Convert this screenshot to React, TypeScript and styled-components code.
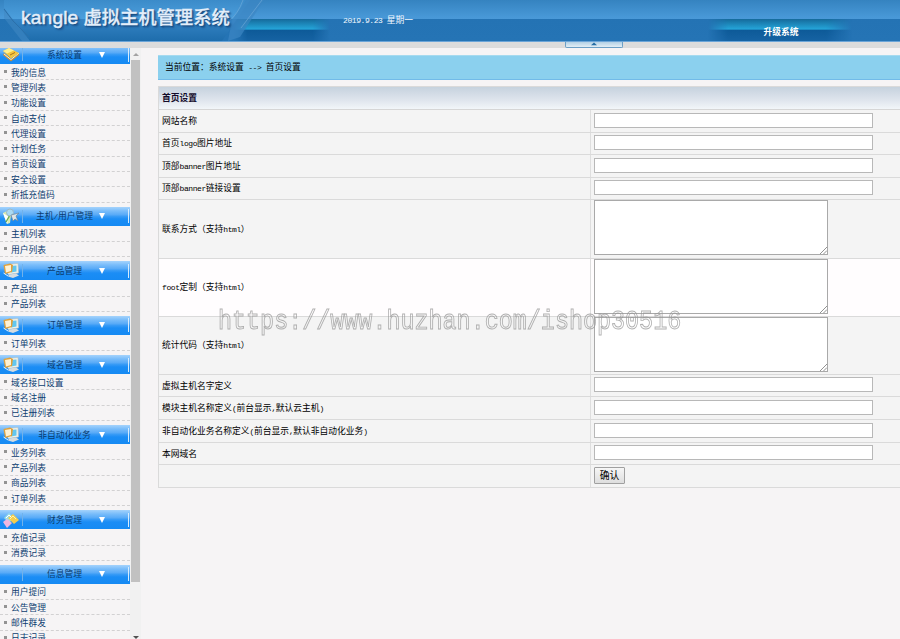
import React from "react";
import styled, { createGlobalStyle } from "styled-components";

const Global = createGlobalStyle`
  * { box-sizing: border-box; }
  body {
    margin: 0;
    background: #f6f4f5;
    font: 8.75px/12px "Noto Sans CJK SC", sans-serif;
    color: #000;
    overflow: hidden;
  }
`;

const Page = styled.div`
  width: 100%;
  height: 639px;
  display: flex;
  flex-direction: column;
  position: relative;
  overflow: hidden;
`;

const Header = styled.header`
  position: relative;
  flex: none;
  height: 42px;
  border-bottom: 1px solid #6ba5d8;
  background: linear-gradient(#3583c0 0, #4898d7 17px, #4a99d8 19px, #2473b4 19px, #2574b5 100%);
`;

const HeaderArt = styled.svg`
  display: block;
  width: 900px;
  height: 41px;
`;

const Logo = styled.h1`
  position: absolute;
  left: 21px;
  top: 6px;
  margin: 0;
  display: flex;
  align-items: baseline;
  gap: 5px;
  font: 500 18.3px/21px "Noto Sans CJK SC", sans-serif;
  color: #e3eefa;
  -webkit-text-stroke: 0.3px #e3eefa;
  text-shadow: 1px 1px 1px #164a80, 2px 2px 2px #1c528b;
  white-space: nowrap;
`;

const LogoLatin = styled.span`
  font: 400 19.2px/21px "Liberation Sans", sans-serif;
  letter-spacing: 0.15px;
  -webkit-text-stroke: 0.5px #e3eefa;
`;

const DateText = styled.div`
  position: absolute;
  left: 343px;
  top: 14px;
  color: #f2f8ff;
  white-space: pre;
`;

const Upgrade = styled.a`
  position: absolute;
  left: 711px;
  top: 26px;
  width: 140px;
  text-align: center;
  color: #fff;
  font-weight: 700;
`;

const Strip = styled.div`
  flex: none;
  height: 6px;
  background: #dcdcdc;
  padding-left: 565px;
`;

const Toggle = styled.div`
  width: 58px;
  height: 6px;
  display: flex;
  justify-content: center;
  border: 1px solid #6b9fc6;
  border-top: 0;
  border-radius: 0 0 2px 2px;
  background: linear-gradient(#b2d0e5, #e2eef5);
`;

const Body = styled.div`
  flex: 1;
  min-height: 0;
  display: flex;
`;

const Sidebar = styled.nav`
  width: 130px;
  flex: none;
  overflow: hidden;
`;

const Menu = styled.div`
  margin-top: -3px;
`;

const Group = styled.section`
  padding-bottom: 4px;
`;

const GroupHead = styled.div`
  height: 19px;
  margin-bottom: 1px;
  display: grid;
  grid-template-columns: 22px 1px 83px 1fr 1px 1px;
  align-items: center;
  background: linear-gradient(#a5d3fc 0, #78bcfa 4px, #56a9f7 8px, #3c9df6 9px, #1b8df5 12px, #168af3 100%);
  color: #0a3c70;
`;

const HeadIcon = styled.svg`
  width: 18px;
  height: 17px;
  margin-left: 2px;
`;

const HeadRule = styled.i`
  height: 13px;
  background: #71b2ea;
`;

const HeadEdge = styled.i`
  height: 14px;
  background: #d5ecff;
`;

const HeadTitle = styled.span`
  text-align: center;
  white-space: nowrap;
`;

const Arrow = styled.svg`
  width: 6px;
  height: 6px;
  margin-left: -7px;
`;

const Item = styled.a`
  height: 15.3px;
  display: flex;
  align-items: center;
  border-bottom: 1px dashed #d2d1d2;
  color: #0c3d70;
  padding: 1px 0 0 4px;
  white-space: nowrap;
  &::before {
    content: "";
    width: 3px;
    height: 3px;
    margin: -2px 4px 0 0;
    background: #939393;
  }
`;

const Scrollbar = styled.div`
  width: 11px;
  flex: none;
  display: flex;
  flex-direction: column;
  background: #f1f1f1;
  padding-left: 1px;
`;

const ScrollArrow = styled.svg`
  display: block;
  width: 10px;
  height: 12px;
`;

const Thumb = styled.div`
  height: 522px;
  margin-bottom: auto;
  background: #c1c1c1;
  width: 9px;
`;

const Main = styled.main`
  flex: 1;
  min-width: 0;
  padding: 7px 0 0 17px;
`;

const Crumb = styled.div`
  height: 25px;
  display: flex;
  align-items: center;
  padding-left: 7px;
  background: #8bd0ee;
  border-top: 1px solid #a6daef;
  border-bottom: 1px solid #72bbe9;
  white-space: pre;
`;

const Table = styled.div`
  margin-top: 6px;
  border: 1px solid #dadada;
  border-right: 0;
  border-bottom: 0;
`;

const TableHead = styled.div`
  height: 23px;
  padding-left: 3px;
  display: flex;
  align-items: center;
  font-weight: 700;
  color: #130b2a;
  background: linear-gradient(#c6d2de, #dfe5ed 60%, #f2f6f9);
  border-bottom: 1px solid #d6d6d6;
`;

const Row = styled.div<{ $h: number; $light?: boolean }>`
  height: ${(p) => p.$h}px;
  display: grid;
  grid-template-columns: 432px 1fr;
  background: ${(p) => (p.$light ? "#fffdfe" : "#f4f4f4")};
  border-bottom: 1px solid #dadada;
`;

const Label = styled.label`
  display: flex;
  align-items: center;
  padding-left: 3px;
  border-right: 1px solid #dedede;
  white-space: pre;
`;

const Cell = styled.div`
  display: flex;
  align-items: center;
  padding: 0 0 2px 3px;
`;

const TextInput = styled.input`
  width: 279px;
  height: 15px;
  padding: 0 2px;
  border: 1px solid #b8b8b8;
  background: #fff;
  border-radius: 0;
`;

const TextBox = styled.div`
  width: 234px;
  height: 55px;
  margin-top: -1px;
  display: flex;
  justify-content: flex-end;
  align-items: flex-end;
  border: 1px solid #a9a9a9;
  background: #fff;
`;

const Confirm = styled.button`
  width: 31px;
  height: 17px;
  padding: 0;
  border: 1px solid #a0a0a0;
  border-radius: 1px;
  background: linear-gradient(#f6f6f6, #dedede);
  font: 9.8px/14px "Noto Sans CJK SC", sans-serif;
`;

const Mono = styled.span`
  font-family: "Liberation Mono", monospace;
  font-size: 8px;
  letter-spacing: -0.42px;
`;

const Watermark = styled.div`
  position: absolute;
  left: 218px;
  top: 308px;
  font: 23.4px/28px "Liberation Mono", monospace;
  color: transparent;
  -webkit-text-stroke: 0.8px rgba(150, 150, 150, 0.75);
  transform: scaleY(1.2);
  white-space: nowrap;
  pointer-events: none;
`;

/* Half-width characters take exactly half of a Chinese character's advance. */
const T = ({ children }: { children: string }) => (
  <span>
    {children.split(/([\x20-\x7e]+)/).map((s, i) => (i % 2 ? <Mono key={i}>{s}</Mono> : s))}
  </span>
);

type IconName = "book" | "tools" | "screen" | "cards" | "none";

const Icon = ({ name }: { name: IconName }) => (
  <HeadIcon viewBox="0 0 18 17">
    {name === "book" && (
      <>
        <path d="M1 9 9 15.500 17 9 17 7 9 13 2 7Z" fill="#c98f3a" />
        <path d="M2 8 9 13.500 17 7" stroke="#fff3c9" fill="none" />
        <path d="M1 5 7 2 17 7 9 12.500Z" fill="#f5c63d" />
        <path d="M1 5 7 2 12 4.500 5 7.500Z" fill="#fff08f" />
        <path d="M8 9 13 6.500" stroke="#a9701c" />
      </>
    )}
    {name === "tools" && (
      <>
        <path d="M1 5 5 3 9 7 8 15 5 16Z" fill="#d9e9ae" />
        <path d="M1 5 5 16 7 9Z" fill="#fff" />
        <path d="M4 14 8 7" stroke="#6dad4e" strokeWidth="1.500" />
        <circle cx="8" cy="4.500" r="3.500" fill="#a9d9f3" stroke="#9bb8c8" />
        <path d="M9 7 17 5 14 8 16 13 13 11 11 13Z" fill="#dce4e8" stroke="#6d8799" strokeWidth=".7" />
      </>
    )}
    {name === "screen" && (
      <>
        <path d="M4 2.500 16 1.500 16.500 11 6 12.500Z" fill="#f3f2e8" stroke="#b9c2c0" strokeWidth=".6" />
        <path d="M8 4 14.500 3.500 14.500 9.500 9 10.500Z" fill="#62c7ef" />
        <path d="M7 12.500 14 11.500 17 13.500 11 16 6 14.500Z" fill="#d5dce0" />
        <path d="M1.500 3 8 1.500 11 3 10 10 3 12Z" fill="#e0a13c" />
        <path d="M3 4 9 3 9 9 4 10.500Z" fill="#fff2d4" />
        <path d="M1.500 11 6 14" stroke="#e8f5ff" />
      </>
    )}
    {name === "cards" && (
      <>
        <path d="M2 7 7 2 12 7 7 12Z" fill="#9bdde8" />
        <path d="M1 11 5 8 10 12 5 17Z" fill="#f0b7df" />
        <path d="M6 7 11 3 17 9 12 13Z" fill="#f6cd4e" />
        <path d="M4 7 7 4 10 7" fill="none" stroke="#fff" />
        <path d="M8 8 11 5 14 8" fill="none" stroke="#fff2a5" />
      </>
    )}
  </HeadIcon>
);

const groups: { title: string; icon: IconName; items: string[] }[] = [
  { title: "系统设置", icon: "book", items: ["我的信息", "管理列表", "功能设置", "自动支付", "代理设置", "计划任务", "首页设置", "安全设置", "折抵充值码"] },
  { title: "主机/用户管理", icon: "tools", items: ["主机列表", "用户列表"] },
  { title: "产品管理", icon: "screen", items: ["产品组", "产品列表"] },
  { title: "订单管理", icon: "screen", items: ["订单列表"] },
  { title: "域名管理", icon: "screen", items: ["域名接口设置", "域名注册", "已注册列表"] },
  { title: "非自动化业务", icon: "screen", items: ["业务列表", "产品列表", "商品列表", "订单列表"] },
  { title: "财务管理", icon: "cards", items: ["充值记录", "消费记录"] },
  { title: "信息管理", icon: "none", items: ["用户提问", "公告管理", "邮件群发", "日志记录"] },
];

const fields: { label: string; h: number; area?: boolean; light?: boolean }[] = [
  { label: "网站名称", h: 23 },
  { label: "首页logo图片地址", h: 22 },
  { label: "顶部banner图片地址", h: 23 },
  { label: "顶部banner链接设置", h: 22 },
  { label: "联系方式（支持html）", h: 59, area: true },
  { label: "foot定制（支持html）", h: 58, area: true, light: true },
  { label: "统计代码（支持html）", h: 58, area: true },
  { label: "虚拟主机名字定义", h: 22 },
  { label: "模块主机名称定义(前台显示,默认云主机)", h: 23 },
  { label: "非自动化业务名称定义(前台显示,默认非自动化业务)", h: 23 },
  { label: "本网域名", h: 22 },
];

export default function App() {
  return (
    <Page>
      <Global />
      <Header>
        <HeaderArt viewBox="0 0 900 41">
          <defs>
            <linearGradient id="panel" x1="0" y1="0" x2="0" y2="1">
              <stop offset="0" stopColor="#3b8bc9" />
              <stop offset=".46" stopColor="#4c9fdd" />
              <stop offset=".47" stopColor="#3584c5" />
              <stop offset="1" stopColor="#1e6dac" />
            </linearGradient>
            <linearGradient id="fade" x1="0" y1="0" x2="1" y2="0">
              <stop offset="0" stopColor="#fff" stopOpacity="0" />
              <stop offset=".14" stopColor="#fff" />
              <stop offset=".82" stopColor="#fff" />
              <stop offset="1" stopColor="#fff" stopOpacity="0" />
            </linearGradient>
            <linearGradient id="glow" x1="0" y1="0" x2="0" y2="1">
              <stop offset="0" stopColor="#156a9b" />
              <stop offset=".47" stopColor="#25a6da" />
              <stop offset=".49" stopColor="#0d5a98" />
              <stop offset="1" stopColor="#1663a3" />
            </linearGradient>
            <mask id="right"><rect x="708" y="19" width="144" height="22" fill="url(#fade)" /></mask>
            <mask id="left"><rect x="234" y="19" width="96" height="22" fill="url(#fade)" /></mask>
          </defs>
          <path d="M4 0H250L222 41H30L4 8Z" fill="url(#panel)" />
          <path d="M4 8 30 41H22L4 18Z" fill="#4289c2" opacity=".55" />
          <path d="M4 9 13 21 29 37" stroke="#2b70aa" strokeWidth="1" fill="none" />
          <rect x="234" y="19" width="96" height="22" fill="url(#glow)" mask="url(#left)" />
          <path d="M232 20 246 0H264L240 37 228 41Z" fill="#3c86c3" opacity=".7" />
          <path d="M230 20Q238 14 243 0M241 28 262 0" stroke="#74acd9" strokeOpacity=".6" fill="none" />
          <rect x="708" y="19" width="144" height="22" fill="url(#glow)" mask="url(#right)" />
        </HeaderArt>
        <Logo><LogoLatin>kangle</LogoLatin>虚拟主机管理系统</Logo>
        <DateText><T>2019.9.23 星期一</T></DateText>
        <Upgrade>升级系统</Upgrade>
      </Header>
      <Strip>
        <Toggle>
          <svg width="6" height="4" viewBox="0 0 6 4"><path d="M0 3.200 3 .5 6 3.200Z" fill="#246da4" /></svg>
        </Toggle>
      </Strip>
      <Body>
        <Sidebar>
          <Menu>
            {groups.map((g) => (
              <Group key={g.title}>
                <GroupHead>
                  <Icon name={g.icon} />
                  <HeadRule />
                  <HeadTitle><T>{g.title}</T></HeadTitle>
                  <Arrow viewBox="0 0 6 6"><path d="M0 0H6L3 6Z" fill="#fff" /></Arrow>
                  <HeadEdge />
                </GroupHead>
                {g.items.map((t) => <Item key={t}>{t}</Item>)}
              </Group>
            ))}
          </Menu>
        </Sidebar>
        <Scrollbar>
          <ScrollArrow viewBox="0 0 10 12"><path d="M2 8 5 5 8 8Z" fill="#a3a3a3" /></ScrollArrow>
          <Thumb />
          <ScrollArrow viewBox="0 0 10 12"><path d="M2 9 5 12 8 9Z" fill="#505050" /></ScrollArrow>
        </Scrollbar>
        <Main>
          <Crumb><T>{"当前位置：系统设置 --> 首页设置"}</T></Crumb>
          <Table>
            <TableHead>首页设置</TableHead>
            {fields.map((f) => (
              <Row key={f.label} $h={f.h} $light={f.light}>
                <Label><T>{f.label}</T></Label>
                <Cell>
                  {f.area ? (
                    <TextBox>
                      <svg width="7" height="7" viewBox="0 0 7 7"><path d="M0 7 7 0M3.500 7 7 3.500" stroke="#777" strokeWidth=".8" /></svg>
                    </TextBox>
                  ) : (
                    <TextInput />
                  )}
                </Cell>
              </Row>
            ))}
            <Row $h={23}>
              <Label />
              <Cell><Confirm>确认</Confirm></Cell>
            </Row>
          </Table>
        </Main>
      </Body>
      <Watermark>https://www.huzhan.com/ishop30516</Watermark>
    </Page>
  );
}
